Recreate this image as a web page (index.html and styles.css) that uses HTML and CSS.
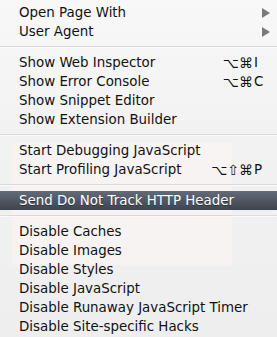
FILE: index.html
```html
<!DOCTYPE html>
<html lang="en">
<head>
    <meta charset="UTF-8">
    <title>Develop</title>
    <link rel="stylesheet" href="styles.css">
</head>
<body>

<!-- menu Develop -->
<div class="menu">
    <div class="fondo"></div>

    <div class="item"><span class="txt">Open Page With</span><span class="flecha"></span></div>
    <div class="item"><span class="txt">User Agent</span><span class="flecha"></span></div>
    <div class="sep"></div>

    <div class="item"><span class="txt">Show Web Inspector</span><span class="mods">⌥⌘</span><span class="tecla">I</span></div>
    <div class="item"><span class="txt">Show Error Console</span><span class="mods">⌥⌘</span><span class="tecla">C</span></div>
    <div class="item"><span class="txt">Show Snippet Editor</span></div>
    <div class="item"><span class="txt">Show Extension Builder</span></div>
    <div class="sep"></div>

    <div class="item"><span class="txt">Start Debugging JavaScript</span></div>
    <div class="item"><span class="txt">Start Profiling JavaScript</span><span class="mods">⌥⇧⌘</span><span class="tecla">P</span></div>
    <div class="sep"></div>

    <div class="item activo"><span class="txt">Send Do Not Track HTTP Header</span></div>
    <div class="sep"></div>

    <div class="item"><span class="txt">Disable Caches</span></div>
    <div class="item"><span class="txt">Disable Images</span></div>
    <div class="item"><span class="txt">Disable Styles</span></div>
    <div class="item"><span class="txt">Disable JavaScript</span></div>
    <div class="item"><span class="txt">Disable Runaway JavaScript Timer</span></div>
    <div class="item"><span class="txt">Disable Site-specific Hacks</span></div>
</div>

</body>
</html>
```

FILE: styles.css
```css
body{
    margin: 0;
    font-family: "DejaVu Sans", sans-serif;
    background: #f2f2f2;
}

.menu{
    position: relative;
    width: 277px;
    height: 337px;
    padding-top: 3px;
    box-sizing: border-box;
    background: linear-gradient(#f8f8f8, #f2f2f2 40%, #eeeeee);
    overflow: hidden;
}

/* la ventana de atras que se ve un poco */
.fondo{
    position: absolute;
    left: 12px;
    top: 143px;
    width: 220px;
    height: 122px;
    background: rgba(255, 246, 246, 0.45);
}

.item{
    position: relative;
    display: flex;
    align-items: center;
    height: 19px;
    padding-left: 19px;
    padding-right: 8px;
    font-size: 13.4px;
    color: #111;
}

.txt{
    flex: 1;
    white-space: nowrap;
}

.mods{
    text-align: right;
    font-size: 14px;
    margin-right: -2px;
}

.tecla{
    width: 15px;
    padding-left: 3px;
}

.flecha{
    width: 0;
    height: 0;
    margin-right: -1px;
    border-top: 5px solid transparent;
    border-bottom: 5px solid transparent;
    border-left: 8px solid #7a7a7a;
}

.sep{
    height: 12px;
    position: relative;
}
.sep::after{
    content: "";
    position: absolute;
    left: 0;
    right: 0;
    top: 5px;
    height: 1px;
    background: #d9d9d9;
    border-bottom: 1px solid #fafafa;
}

.activo{
    background: linear-gradient(#646b78, #3d4450);
    color: #fff;
    text-shadow: 0 1px 0 rgba(0,0,0,0.4);
}
```
